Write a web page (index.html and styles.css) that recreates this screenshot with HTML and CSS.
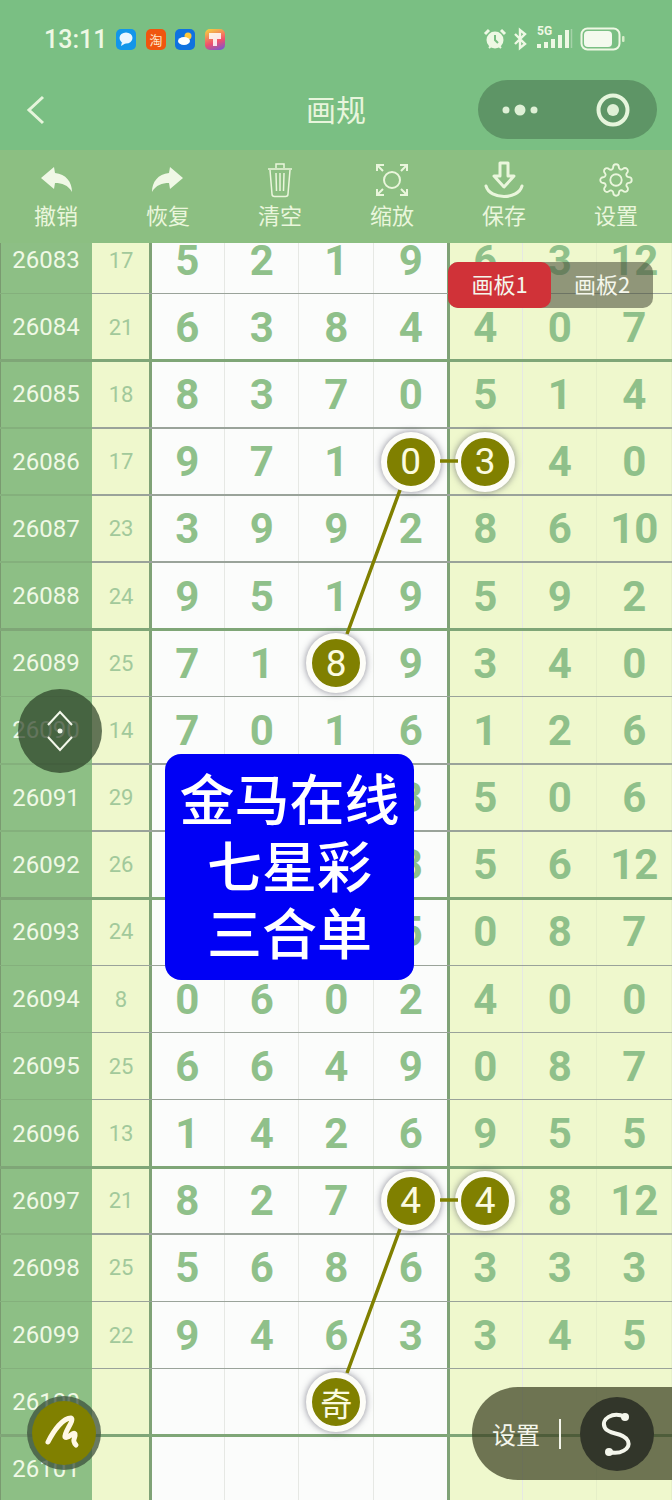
FILE: index.html
```html
<!DOCTYPE html>
<html lang="zh-CN">
<head>
    <meta charset="UTF-8">
    <meta name="viewport" content="width=device-width, initial-scale=1.0">
    <title>画规</title>
    <link rel="stylesheet" href="styles.css">
</head>
<body>
    <div class="page">
        <div class="status-bar">
            <div class="status-left">
                <span class="time">13:11</span>
                <span class="app app-chat">
                    <svg width="20" height="20" viewBox="0 0 20 20"><ellipse cx="10" cy="9" rx="6.5" ry="5.5" fill="#eaf6ff"/><path d="M6 13l-1 4 5-3z" fill="#eaf6ff"/></svg>
                </span>
                <span class="app app-taobao">淘</span>
                <span class="app app-weather">
                    <svg width="20" height="20" viewBox="0 0 20 20"><circle cx="13" cy="7" r="3.5" fill="#ffc83a"/><ellipse cx="9" cy="12" rx="6" ry="4" fill="#fff"/></svg>
                </span>
                <span class="app app-brush">
                    <svg width="20" height="20" viewBox="0 0 20 20"><path d="M4 4h12v6h-4v7H8v-7H4z" fill="#fff" opacity=".85"/></svg>
                </span>
            </div>
            <div class="status-right">
                <svg width="24" height="24" viewBox="0 0 24 24"><circle cx="12" cy="13" r="8.5" fill="#eef8e4"/><path d="M12 8v5l3 3" fill="none" stroke="#7abf83" stroke-width="2"/><path d="M2 7l4-4M22 7l-4-4" stroke="#eef8e4" stroke-width="3"/><path d="M6 21l2-2M18 21l-2-2" stroke="#eef8e4" stroke-width="2"/></svg>
                <svg width="16" height="24" viewBox="0 0 16 24"><path d="M3 7l10 10-5 4V3l5 4L3 17" fill="none" stroke="#eef8e4" stroke-width="2.4"/></svg>
                <span class="signal">
                    <span class="net">5G</span>
                    <svg width="36" height="24" viewBox="0 0 36 24"><path d="M0 17h4v4H0zM7 15h4v6H7zM14 12h4v9h-4zM21 8h4v13h-4zM28 3h4v18h-4z" fill="#eef8e4"/><path d="M34.500 2v19" stroke="#a5d3a8" stroke-width="1.5"/></svg>
                </span>
                <svg width="46" height="24" viewBox="0 0 46 24"><rect x="1.5" y="1.5" width="38" height="21" rx="6" fill="none" stroke="#eef8e4" stroke-width="2"/><rect x="4" y="4" width="28" height="16" rx="4" fill="#f4faee"/><rect x="42" y="9" width="2.5" height="6" rx="1" fill="#d5ecc8"/></svg>
            </div>
        </div>

        <div class="nav">
            <svg class="back" width="24" height="36" viewBox="0 0 24 36"><path d="M19 5L5 18l14 13" fill="none" stroke="#e6f5dc" stroke-width="3"/></svg>
            <div class="nav-title">画规</div>
            <div class="capsule">
                <svg width="44" height="16" viewBox="0 0 44 16"><circle cx="6" cy="8" r="3.5" fill="#dff0d6"/><circle cx="20" cy="8" r="5.5" fill="#dff0d6"/><circle cx="34" cy="8" r="3.5" fill="#dff0d6"/></svg>
                <svg width="36" height="36" viewBox="0 0 36 36"><circle cx="18" cy="18" r="14.5" fill="none" stroke="#e6f5dc" stroke-width="4"/><circle cx="18" cy="18" r="6" fill="#dff0d6"/></svg>
            </div>
        </div>

        <div class="toolbar">
            <div class="tool">
                <svg width="40" height="40" viewBox="0 0 40 40"><path class="fill" d="M5 18L18 7l1 6c11 1 17 9 17 19-4-7-10-9-17-9l-1 6z"/></svg>
                <span>撤销</span>
            </div>
            <div class="tool">
                <svg width="40" height="40" viewBox="0 0 40 40"><path class="fill" d="M35 18L22 7l-1 6C10 14 4 22 4 32c4-7 10-9 17-9l1 6z"/></svg>
                <span>恢复</span>
            </div>
            <div class="tool">
                <svg width="40" height="40" viewBox="0 0 40 40"><path class="line trash" d="M8 9h24M16 8V4h8v4M10 10l2 24c0 1.500 1 2.500 2.500 2.500h11c1.500 0 2.500-1 2.500-2.500l2-24M16 13l.5 18M20 13v18M24 13l-.5 18"/></svg>
                <span>清空</span>
            </div>
            <div class="tool">
                <svg width="40" height="40" viewBox="0 0 40 40"><circle class="line" cx="20" cy="20" r="8"/><path class="line" d="M5 11V5h7M5 5l6 6M35 11V5h-7M35 5l-6 6M5 29v6h7M5 35l6-6M35 29v6h-7M35 35l-6-6"/></svg>
                <span>缩放</span>
            </div>
            <div class="tool">
                <svg width="40" height="40" viewBox="0 0 40 40"><path class="line thick" d="M16 3h8v13h6L20 27 10 16h6zM2 26c4 14 32 14 36 0"/></svg>
                <span>保存</span>
            </div>
            <div class="tool">
                <svg width="40" height="40" viewBox="-2 -2 28 28"><circle class="line thin" cx="12" cy="12" r="4"/><path class="line thin" d="M19.400 15a1.650 1.650 0 0 0 .33 1.820l.06.06a2 2 0 0 1 0 2.830 2 2 0 0 1-2.830 0l-.06-.06a1.650 1.650 0 0 0-1.820-.33 1.650 1.650 0 0 0-1 1.510V21a2 2 0 0 1-2 2 2 2 0 0 1-2-2v-.09A1.650 1.650 0 0 0 9 19.400a1.650 1.650 0 0 0-1.820.33l-.06.06a2 2 0 0 1-2.830 0 2 2 0 0 1 0-2.830l.06-.06a1.650 1.650 0 0 0 .33-1.820 1.650 1.650 0 0 0-1.510-1H3a2 2 0 0 1-2-2 2 2 0 0 1 2-2h.09A1.650 1.650 0 0 0 4.600 9a1.650 1.650 0 0 0-.33-1.820l-.06-.06a2 2 0 0 1 0-2.830 2 2 0 0 1 2.830 0l.06.06a1.650 1.650 0 0 0 1.820.33H9a1.650 1.650 0 0 0 1-1.510V3a2 2 0 0 1 2-2 2 2 0 0 1 2 2v.09a1.650 1.650 0 0 0 1 1.510 1.650 1.650 0 0 0 1.820-.33l.06-.06a2 2 0 0 1 2.830 0 2 2 0 0 1 0 2.830l-.06.06a1.650 1.650 0 0 0-.33 1.820V9a1.650 1.650 0 0 0 1.510 1H21a2 2 0 0 1 2 2 2 2 0 0 1-2 2h-.09a1.650 1.650 0 0 0-1.510 1z"/></svg>
                <span>设置</span>
            </div>
        </div>

        <div class="table">
            <div class="rows">
                <div class="row"><div class="period">26083</div><div class="sum">17</div><div class="cell start">5</div><div class="cell">2</div><div class="cell">1</div><div class="cell">9</div><div class="cell green start">6</div><div class="cell green">3</div><div class="cell green">12</div></div>
                <div class="row thick"><div class="period">26084</div><div class="sum">21</div><div class="cell start">6</div><div class="cell">3</div><div class="cell">8</div><div class="cell">4</div><div class="cell green start">4</div><div class="cell green">0</div><div class="cell green">7</div></div>
                <div class="row"><div class="period">26085</div><div class="sum">18</div><div class="cell start">8</div><div class="cell">3</div><div class="cell">7</div><div class="cell">0</div><div class="cell green start">5</div><div class="cell green">1</div><div class="cell green">4</div></div>
                <div class="row"><div class="period">26086</div><div class="sum">17</div><div class="cell start">9</div><div class="cell">7</div><div class="cell">1</div><div class="cell"><span class="ball">0</span></div><div class="cell green start"><span class="ball">3</span></div><div class="cell green">4</div><div class="cell green">0</div></div>
                <div class="row"><div class="period">26087</div><div class="sum">23</div><div class="cell start">3</div><div class="cell">9</div><div class="cell">9</div><div class="cell">2</div><div class="cell green start">8</div><div class="cell green">6</div><div class="cell green">10</div></div>
                <div class="row thick"><div class="period">26088</div><div class="sum">24</div><div class="cell start">9</div><div class="cell">5</div><div class="cell">1</div><div class="cell">9</div><div class="cell green start">5</div><div class="cell green">9</div><div class="cell green">2</div></div>
                <div class="row"><div class="period">26089</div><div class="sum">25</div><div class="cell start">7</div><div class="cell">1</div><div class="cell"><span class="ball">8</span></div><div class="cell">9</div><div class="cell green start">3</div><div class="cell green">4</div><div class="cell green">0</div></div>
                <div class="row"><div class="period">26090</div><div class="sum">14</div><div class="cell start">7</div><div class="cell">0</div><div class="cell">1</div><div class="cell">6</div><div class="cell green start">1</div><div class="cell green">2</div><div class="cell green">6</div></div>
                <div class="row"><div class="period">26091</div><div class="sum">29</div><div class="cell start"></div><div class="cell"></div><div class="cell"></div><div class="cell">8</div><div class="cell green start">5</div><div class="cell green">0</div><div class="cell green">6</div></div>
                <div class="row thick"><div class="period">26092</div><div class="sum">26</div><div class="cell start"></div><div class="cell"></div><div class="cell"></div><div class="cell">8</div><div class="cell green start">5</div><div class="cell green">6</div><div class="cell green">12</div></div>
                <div class="row"><div class="period">26093</div><div class="sum">24</div><div class="cell start"></div><div class="cell"></div><div class="cell"></div><div class="cell">5</div><div class="cell green start">0</div><div class="cell green">8</div><div class="cell green">7</div></div>
                <div class="row"><div class="period">26094</div><div class="sum">8</div><div class="cell start">0</div><div class="cell">6</div><div class="cell">0</div><div class="cell">2</div><div class="cell green start">4</div><div class="cell green">0</div><div class="cell green">0</div></div>
                <div class="row"><div class="period">26095</div><div class="sum">25</div><div class="cell start">6</div><div class="cell">6</div><div class="cell">4</div><div class="cell">9</div><div class="cell green start">0</div><div class="cell green">8</div><div class="cell green">7</div></div>
                <div class="row thick"><div class="period">26096</div><div class="sum">13</div><div class="cell start">1</div><div class="cell">4</div><div class="cell">2</div><div class="cell">6</div><div class="cell green start">9</div><div class="cell green">5</div><div class="cell green">5</div></div>
                <div class="row"><div class="period">26097</div><div class="sum">21</div><div class="cell start">8</div><div class="cell">2</div><div class="cell">7</div><div class="cell"><span class="ball">4</span></div><div class="cell green start"><span class="ball">4</span></div><div class="cell green">8</div><div class="cell green">12</div></div>
                <div class="row"><div class="period">26098</div><div class="sum">25</div><div class="cell start">5</div><div class="cell">6</div><div class="cell">8</div><div class="cell">6</div><div class="cell green start">3</div><div class="cell green">3</div><div class="cell green">3</div></div>
                <div class="row"><div class="period">26099</div><div class="sum">22</div><div class="cell start">9</div><div class="cell">4</div><div class="cell">6</div><div class="cell">3</div><div class="cell green start">3</div><div class="cell green">4</div><div class="cell green">5</div></div>
                <div class="row thick"><div class="period">26100</div><div class="sum"></div><div class="cell start"></div><div class="cell"></div><div class="cell"><span class="ball ball-text">奇</span></div><div class="cell"></div><div class="cell green start"></div><div class="cell green"></div><div class="cell green"></div></div>
                <div class="row"><div class="period">26101</div><div class="sum"></div><div class="cell start"></div><div class="cell"></div><div class="cell"></div><div class="cell"></div><div class="cell green start"></div><div class="cell green"></div><div class="cell green"></div></div>
            </div>
        </div>

        <svg class="links" width="672" height="1500" viewBox="0 0 672 1500">
            <path d="M400 490L347 634M440 461H458M400 1229L347 1373M440 1200H458" fill="none" stroke="#808000" stroke-width="3.5"/>
        </svg>

        <div class="tabs">
            <div class="tab active">画板1</div>
            <div class="tab">画板2</div>
        </div>

        <div class="promo">
            <div>金马在线</div>
            <div>七星彩</div>
            <div>三合单</div>
        </div>

        <div class="float-move">
            <svg width="40" height="56" viewBox="0 0 40 56"><path d="M8 22L20 9l12 13M8 34l12 13 12-13" fill="none" stroke="#f2f7ea" stroke-width="2"/><circle cx="20" cy="28" r="2.500" fill="#f2f7ea"/></svg>
        </div>

        <div class="float-pen">
            <div class="pen-inner">
                <svg width="64" height="64" viewBox="0 0 64 64"><path d="M16 41C22 29 31 17 39 17c4 2-7 14-6 19 3 3 8-6 10-3 1 4-4 6 1 11" fill="none" stroke="#fff8e4" stroke-width="5" stroke-linecap="round" stroke-linejoin="round"/></svg>
            </div>
        </div>

        <div class="float-setting">
            <span class="setting-text">设置</span>
            <span class="setting-line"></span>
            <span class="setting-btn">
                <svg width="74" height="74" viewBox="0 0 74 74"><path d="M45 20C33 14 20 22 25 31c4 7 19 4 23 13 3 8-8 14-19 11" fill="none" stroke="#f4f6ec" stroke-width="4"/><circle cx="45" cy="20" r="4" fill="#f4f6ec"/><circle cx="29" cy="55" r="4" fill="#f4f6ec"/></svg>
            </span>
        </div>
    </div>
</body>
</html>
```

FILE: styles.css
```css
body {
    margin: 0;
    font-family: "Noto Sans CJK SC", Roboto, sans-serif;
    background: #7abf83;
}
.page {
    position: relative;
    width: 672px;
    height: 1500px;
    overflow: hidden;
}
.status-bar {
    display: flex;
    justify-content: space-between;
    align-items: center;
    height: 78px;
    padding: 0 46px 0 44px;
    background: #7abf83;
    color: #eef8e4;
}
.status-left,
.status-right {
    display: flex;
    align-items: center;
}
.status-right {
    gap: 5px;
}
.time {
    font-family: Roboto, sans-serif;
    font-size: 25px;
    font-weight: 500;
    margin-right: 9px;
}
.app {
    display: flex;
    align-items: center;
    justify-content: center;
    width: 20px;
    height: 21px;
    border-radius: 5px;
    margin-right: 9.500px;
    font-size: 13px;
    line-height: 1;
}
.app-chat {
    background: #1296ea;
}
.app-taobao {
    background: #f0560f;
    color: #ffe6c8;
}
.app-weather {
    background: #0f72e0;
}
.app-brush {
    background: linear-gradient(160deg, #f7d83e, #ef4f6e 60%, #6a58e0);
}
.signal {
    position: relative;
    display: block;
    width: 36px;
    height: 24px;
    margin: 0 2px 0 4px;
}
.net {
    position: absolute;
    left: 0;
    top: -3px;
    font-family: Roboto, sans-serif;
    font-size: 12px;
    font-weight: 700;
    line-height: 14px;
}
.nav {
    position: relative;
    display: flex;
    align-items: center;
    justify-content: center;
    height: 72px;
    background: #7abf83;
}
.back {
    position: absolute;
    left: 24px;
    top: 14px;
}
.nav-title {
    font-size: 30px;
    line-height: 40px;
    color: #e8f5dc;
    margin-bottom: 12px;
}
.capsule {
    position: absolute;
    left: 478px;
    top: 2px;
    display: flex;
    align-items: center;
    justify-content: space-between;
    box-sizing: border-box;
    width: 179px;
    height: 59px;
    padding: 0 26px 0 22px;
    border-radius: 30px;
    background: #5e9566;
}
.toolbar {
    display: grid;
    grid-template-columns: repeat(6, 112px);
    box-sizing: border-box;
    height: 93px;
    padding-top: 10px;
    background: #8cbf82;
}
.tool {
    display: flex;
    flex-direction: column;
    align-items: center;
    color: #eaf6dc;
    font-size: 22px;
    line-height: 28px;
}
.tool svg {
    display: block;
}
.fill {
    fill: #f0f8e6;
}
.line {
    fill: none;
    stroke: #eaf6dc;
    stroke-width: 2;
}
.trash {
    stroke-width: 1.500;
}
.thick {
    stroke-width: 3;
    stroke-linecap: round;
    stroke-linejoin: round;
}
.thin {
    stroke-width: 1.300;
}
.table {
    position: relative;
    z-index: 0;
    height: 1257px;
    overflow: hidden;
}
.rows {
    margin-top: -16.500px;
}
.row {
    position: relative;
    display: grid;
    grid-template-columns: 92px 58px repeat(7, 74.500px);
    height: 67.200px;
}
.row::after {
    content: "";
    position: absolute;
    z-index: 1;
    left: 0;
    right: 0;
    bottom: -0.500px;
    height: 1.500px;
    background: linear-gradient(90deg, #84b07c 92px, #9aa39a 92px);
}
.row.thick::after {
    bottom: -1.500px;
    height: 3px;
    background: #7fa677;
}
.period,
.sum,
.cell {
    display: flex;
    align-items: center;
    justify-content: center;
    font-family: Roboto, sans-serif;
}
.period {
    background: #8dbf85;
    box-shadow: inset 1px 0 0 #7a9a70;
    color: #f0f9e6;
    font-size: 24px;
}
.sum {
    background: #eff8cd;
    color: #a2c99b;
    font-size: 22px;
}
.cell {
    background: #fbfcfb;
    box-shadow: inset -1px 0 0 #e6e8e4;
    color: #8fc08a;
    font-size: 42px;
    font-weight: 700;
}
.cell.green {
    background: #eff8cd;
    box-shadow: inset -1px 0 0 #e6efc8;
}
.cell.start {
    box-shadow: inset 2px 0 0 #7fa276, -1px 0 0 #7fa276, inset -1px 0 0 #e6e8e4;
}
.ball {
    position: relative;
    z-index: 2;
    box-sizing: border-box;
    display: flex;
    align-items: center;
    justify-content: center;
    width: 60px;
    height: 60px;
    border: 6px solid #fdfdf8;
    border-radius: 50%;
    background: #808000;
    box-shadow: 0 0 7px rgba(60, 60, 80, 0.6);
    color: #fbfbe0;
    font-size: 37px;
    font-weight: 400;
}
.ball-text {
    font-family: "Noto Sans CJK SC", sans-serif;
    font-size: 32px;
}
.links {
    position: absolute;
    left: 0;
    top: 0;
}
.tabs {
    position: absolute;
    left: 448px;
    top: 262px;
    display: flex;
    width: 205px;
    height: 46px;
    border-radius: 10px;
    background: rgba(80, 85, 65, 0.6);
    color: #f4f6ec;
    font-size: 22px;
    line-height: 42px;
}
.tab {
    display: flex;
    flex: 1;
    justify-content: center;
}
.tab.active {
    flex: 0 0 103px;
    border-radius: 10px;
    background: #d03238;
}
.promo {
    position: absolute;
    left: 165px;
    top: 754px;
    box-sizing: border-box;
    width: 249px;
    height: 226px;
    padding-top: 9px;
    border-radius: 16px;
    background: #0000f5;
    color: #fff;
    font-size: 55px;
    font-weight: 500;
    line-height: 67px;
    text-align: center;
}
.float-move {
    position: absolute;
    left: 18px;
    top: 689px;
    display: flex;
    align-items: center;
    justify-content: center;
    width: 84px;
    height: 84px;
    border-radius: 50%;
    background: rgba(40, 61, 36, 0.7);
}
.float-pen {
    position: absolute;
    left: 27px;
    top: 1396px;
    display: flex;
    align-items: center;
    justify-content: center;
    width: 74px;
    height: 74px;
    border-radius: 50%;
    background: rgba(60, 80, 60, 0.75);
}
.pen-inner {
    width: 64px;
    height: 64px;
    border-radius: 50%;
    background: #808000;
}
.float-setting {
    position: absolute;
    left: 472px;
    top: 1387px;
    display: flex;
    align-items: center;
    box-sizing: border-box;
    width: 200px;
    height: 93px;
    padding-left: 20px;
    border-radius: 46px 0 0 46px;
    background: rgba(60, 65, 35, 0.72);
    color: #f4f6ec;
}
.setting-text {
    font-size: 24px;
    width: 48px;
}
.setting-line {
    width: 2px;
    height: 30px;
    margin: 0 19px;
    background: #f4f6ec;
}
.setting-btn {
    display: block;
    width: 74px;
    height: 74px;
    border-radius: 50%;
    background: #32362a;
}
```
